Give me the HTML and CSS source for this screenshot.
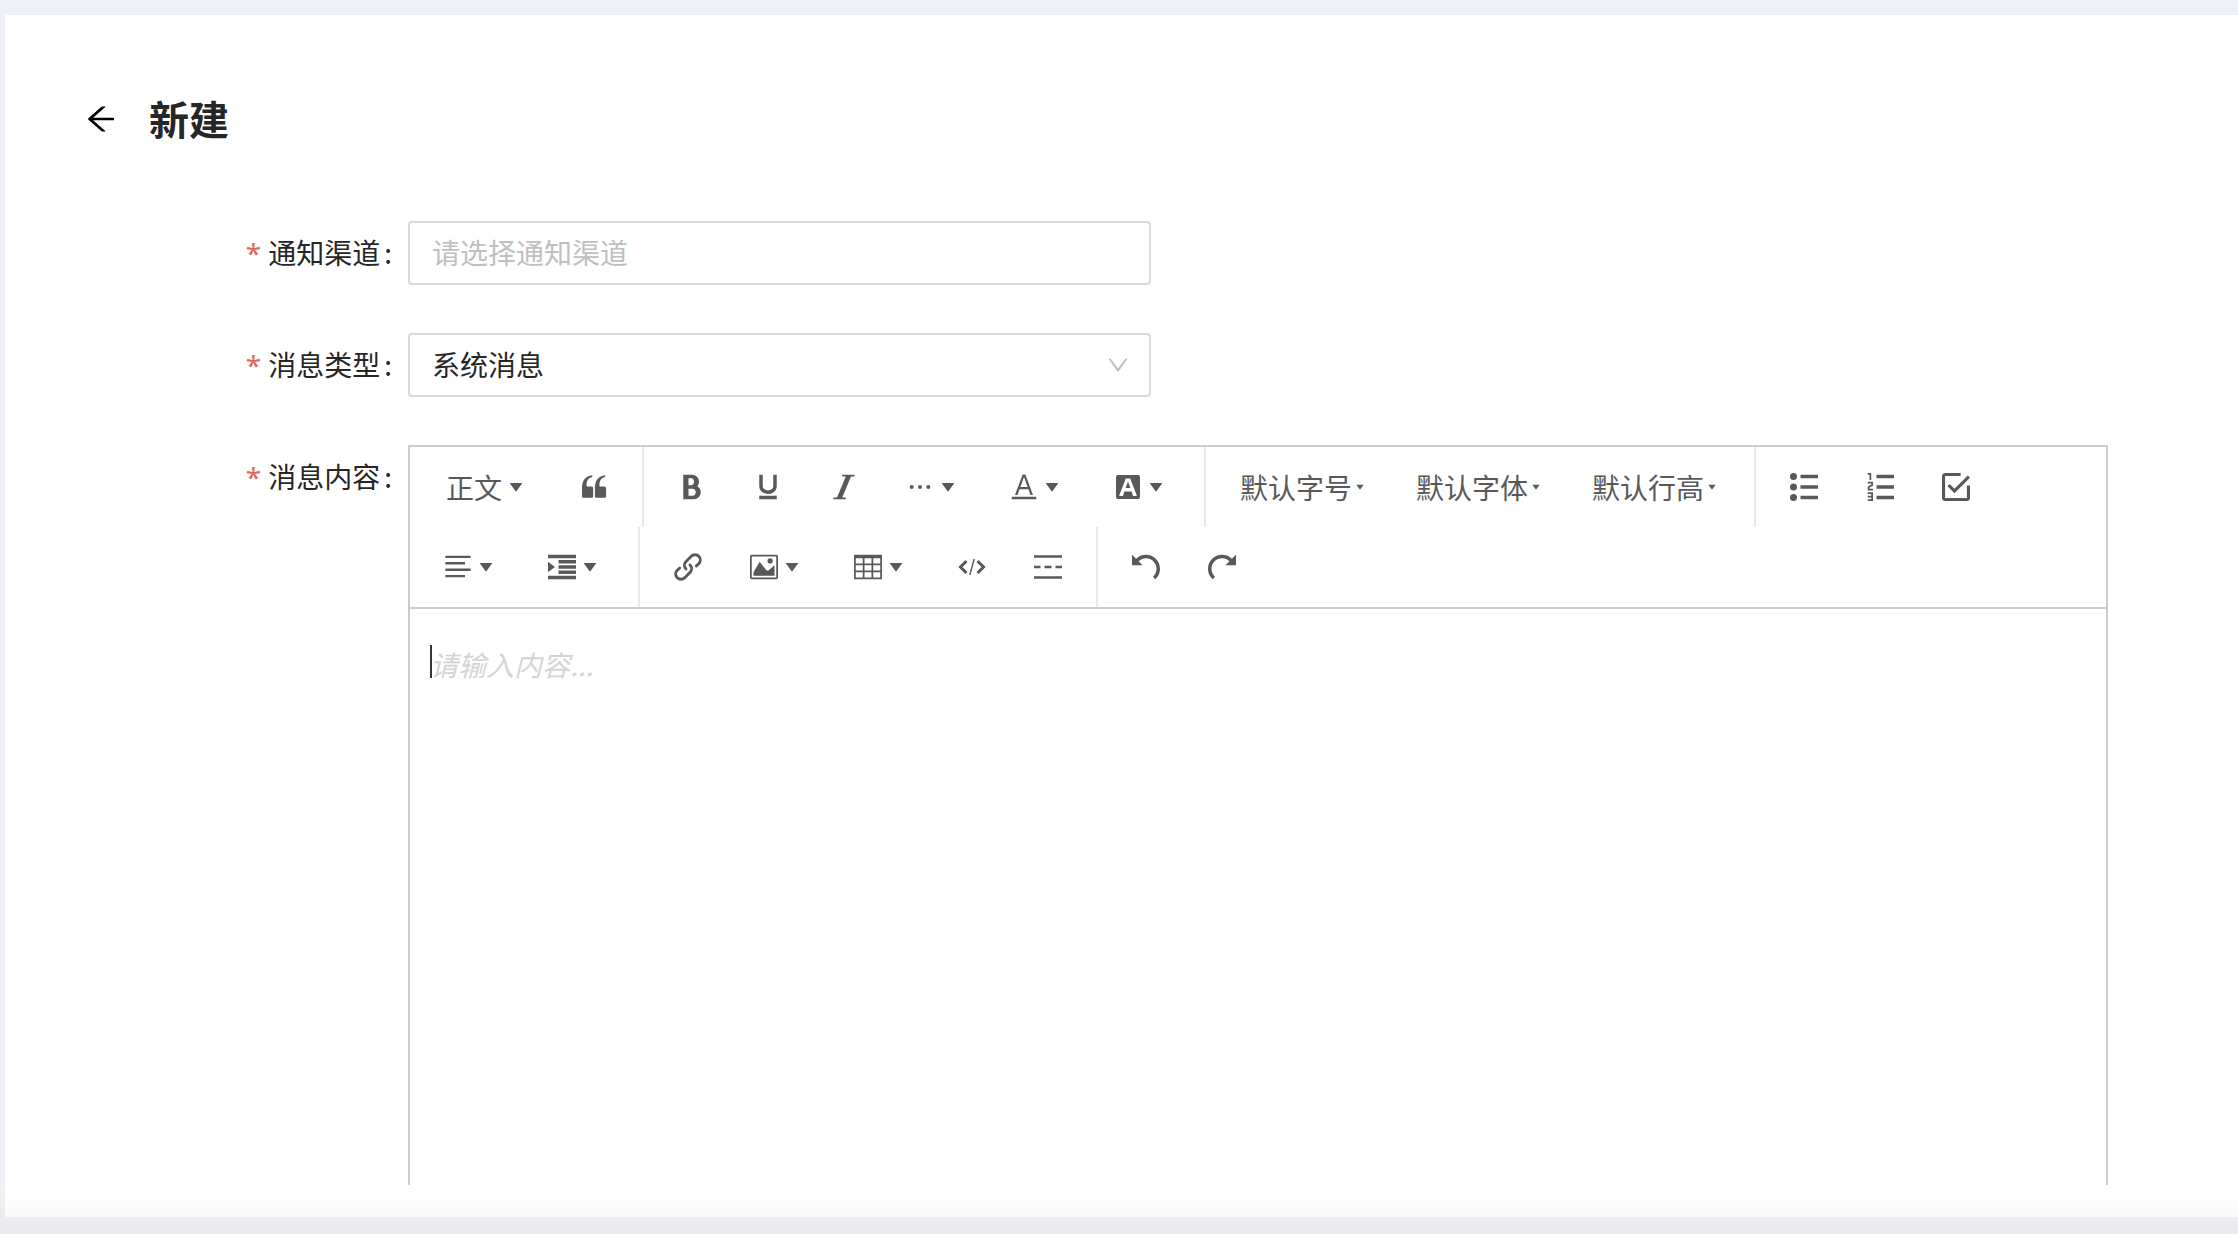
FILE: index.html
```html
<!DOCTYPE html>
<html lang="zh-CN">
<head>
<meta charset="utf-8">
<meta name="viewport" content="width=device-width, initial-scale=1">
<title>新建</title>
<link rel="stylesheet" href="styles.css">
</head>
<body>
<svg class="sprite" aria-hidden="true">
  <symbol id="caret" viewBox="0 0 1024 1024"><path d="M498.7 665.8l-208-278c-8.1-10.9-.3-26.4 13.3-26.4h416c13.6 0 21.4 15.4 13.3 26.4l-208 278c-6.6 9-20 9-26.6 0z"/></symbol>
</svg>
<main class="card">
  <header class="page-header">
    <button class="back" type="button" aria-label="返回">
      <svg class="back-icon" viewBox="0 0 1024 1024"><path d="M872 474H286.900l350.200-304c5.600-4.900 2.200-14-5.200-14h-88.500c-3.900 0-7.600 1.400-10.500 3.900L155 487.800a31.960 31.960 0 000 48.300L535.100 866c1.500 1.300 3.300 2 5.200 2h91.500c7.400 0 10.800-9.200 5.200-14L286.900 550H872c4.400 0 8-3.600 8-8v-60c0-4.400-3.600-8-8-8z"/></svg>
    </button>
    <h1 class="title">新建</h1>
  </header>
  <form class="form">
    <div class="form-item">
      <label class="label" for="channel"><span class="required">*</span>通知渠道<span class="colon">:</span></label>
      <div class="control">
        <input class="field" id="channel" type="text" placeholder="请选择通知渠道">
      </div>
    </div>
    <div class="form-item">
      <label class="label" for="type"><span class="required">*</span>消息类型<span class="colon">:</span></label>
      <div class="control">
        <select class="field" id="type"><option>系统消息</option></select>
        <svg class="arrow" viewBox="0 0 1024 1024"><path d="M884 256h-75c-5.100 0-9.900 2.500-12.900 6.600L512 654.200 227.900 262.600c-3-4.100-7.800-6.600-12.900-6.600h-75c-6.500 0-10.300 7.400-6.500 12.700l352.600 486.100c12.800 17.600 39 17.600 51.700 0l352.600-486.100c3.900-5.300.1-12.700-6.400-12.700z"/></svg>
      </div>
    </div>
    <div class="form-item form-item-grow">
      <label class="label" for="content"><span class="required">*</span>消息内容<span class="colon">:</span></label>
      <div class="editor">
        <div class="toolbar" role="toolbar" aria-label="编辑工具栏">
          <button class="tool tool-heading" type="button">正文<svg class="icon"><use href="#caret"/></svg></button>
          <button class="tool" type="button" aria-label="引用"><svg class="icon" viewBox="0 0 1024 1024"><path d="M894.600 907.100H605.400c-32.600 0-59-26.400-59-59V608.200l-4-14.900c0-315.900 125.500-485.100 376.500-507.500v59.800C752.700 180.400 711.300 315.800 711.300 442.400v41.200l31.500 12.300h151.800c32.600 0 59 26.400 59 59v293.200c0 32.500-26.400 59-59 59z m-472 0H133.400c-32.600 0-59-26.400-59-59V608.200l-4-14.900c0-315.900 125.500-485.100 376.500-507.500v59.800C280.700 180.400 239.300 315.800 239.300 442.400v41.200l31.500 12.300h151.800c32.600 0 59 26.400 59 59v293.200c0 32.500-26.400 59-59 59z"/></svg></button>
          <span class="divider"></span>
          <button class="tool" type="button" aria-label="粗体"><svg class="icon" viewBox="0 0 1024 1024"><path d="M707.872 484.640A254.880 254.880 0 0 0 768 320c0-141.152-114.848-256-256-256H192v896h384c141.152 0 256-114.848 256-256a256.096 256.096 0 0 0-124.128-219.360zM384 192h101.504c55.968 0 101.504 57.408 101.504 128s-45.536 128-101.504 128H384V192z m159.008 640H384v-256h159.008c58.464 0 106.016 57.408 106.016 128s-47.552 128-106.016 128z"/></svg></button>
          <button class="tool" type="button" aria-label="下划线"><svg class="icon" viewBox="0 0 1024 1024"><path d="M704 64h128v416c0 159.072-143.264 288-320 288s-320-128.928-320-288V64h128v416c0 40.160 18.240 78.688 51.360 108.512 36.896 33.216 86.848 51.488 140.640 51.488s103.744-18.304 140.640-51.488c33.120-29.792 51.360-68.352 51.360-108.512zM192 832h640v128H192z"/></svg></button>
          <button class="tool" type="button" aria-label="斜体"><svg class="icon" viewBox="0 0 1024 1024"><path d="M896 64v64h-128L448 896h128v64H128v-64h128L576 128h-128V64z"/></svg></button>
          <button class="tool" type="button" aria-label="更多"><svg class="icon" viewBox="0 0 28 28"><circle cx="5.700" cy="14" r="2"/><circle cx="14" cy="14" r="2"/><circle cx="22.300" cy="14" r="2"/></svg><svg class="icon"><use href="#caret"/></svg></button>
          <button class="tool" type="button" aria-label="文字颜色"><svg class="icon" viewBox="0 0 1024 1024"><path fill-rule="evenodd" d="M64 864h896v100H64zM274 800h-91L462 55h100l279 745h-91l-76-208H350zM380 510h264L512 150z"/></svg><svg class="icon"><use href="#caret"/></svg></button>
          <button class="tool" type="button" aria-label="背景色"><svg class="icon" viewBox="0 0 28 28"><path fill-rule="evenodd" d="M4 2h20a2 2 0 0 1 2 2v20a2 2 0 0 1-2 2H4a2 2 0 0 1-2-2V4a2 2 0 0 1 2-2zM5 23h4l1.400-4.500h7.200L19 23h4L16.200 5.500h-4.400zM11.600 15l2.400-6.500 2.400 6.500z"/></svg><svg class="icon"><use href="#caret"/></svg></button>
          <span class="divider"></span>
          <button class="tool" type="button">默认字号<svg class="icon icon-small"><use href="#caret"/></svg></button>
          <button class="tool" type="button">默认字体<svg class="icon icon-small"><use href="#caret"/></svg></button>
          <button class="tool" type="button">默认行高<svg class="icon icon-small"><use href="#caret"/></svg></button>
          <span class="divider"></span>
          <button class="tool" type="button" aria-label="无序列表"><svg class="icon" viewBox="0 0 1024 1024"><path d="M384 64h640v128H384zM384 448h640v128H384zM384 832h640v128H384z"/><circle cx="128" cy="128" r="128"/><circle cx="128" cy="512" r="128"/><circle cx="128" cy="896" r="128"/></svg></button>
          <button class="tool" type="button" aria-label="有序列表"><svg class="icon" viewBox="0 0 1024 1024"><path d="M384 832h640v128H384z m0-384h640v128H384z m0-384h640v128H384zM192 0v256H128V64H64V0zM128 526.016v50.016h128v64H64v-146.016l128-60V384H64v-64h192v146.016zM256 704v320H64v-64h128v-64H64v-64h128v-64H64v-64z"/></svg></button>
          <button class="tool" type="button" aria-label="待办"><svg class="icon" viewBox="0 0 1024 1024"><path d="M278.756 403.911l-79.645 79.645L455.111 739.556 1024 170.667l-79.644-79.645L455.111 580.267zM910.222 910.222H113.778V113.778h568.889V0H113.778C51.200 0 0 51.200 0 113.778v796.444C0 972.800 51.200 1024 113.778 1024h796.444C972.800 1024 1024 972.800 1024 910.222V455.111H910.222z"/></svg></button>
          <button class="tool" type="button" aria-label="对齐"><svg class="icon" viewBox="0 0 1024 1024"><path d="M51 96h922v90H51zM51 328h717v90H51zM51 568h922v90H51zM51 800h717v90H51z"/></svg><svg class="icon"><use href="#caret"/></svg></button>
          <button class="tool" type="button" aria-label="缩进"><svg class="icon" viewBox="0 0 1024 1024"><path d="M0 64h1024v128H0z m384 192h640v128H384z m0 192h640v128H384z m0 192h640v128H384zM0 832h1024v128H0z m0-128V320l256 192z"/></svg><svg class="icon"><use href="#caret"/></svg></button>
          <span class="divider"></span>
          <button class="tool" type="button" aria-label="链接"><svg class="icon" viewBox="0 0 1024 1024"><path d="M440.224 635.776a51.840 51.840 0 0 1-36.768-15.232c-95.136-95.136-95.136-249.920 0-345.056l192-192C641.536 37.408 702.816 12.032 768 12.032s126.432 25.376 172.544 71.456c95.136 95.136 95.136 249.920 0 345.056l-87.776 87.776a51.968 51.968 0 1 1-73.536-73.536l87.776-87.776a140.160 140.160 0 0 0 0-197.984c-26.432-26.432-61.600-40.992-99.008-40.992s-72.576 14.560-99.008 40.992l-192 192a140.160 140.160 0 0 0 0 197.984 51.968 51.968 0 0 1-36.768 88.768zM256 1012a242.400 242.400 0 0 1-172.544-71.456c-95.136-95.136-95.136-249.920 0-345.056l87.776-87.776a51.968 51.968 0 1 1 73.536 73.536l-87.776 87.776a140.160 140.160 0 0 0 0 197.984c26.432 26.432 61.600 40.992 99.008 40.992s72.576-14.560 99.008-40.992l192-192a140.160 140.160 0 0 0 0-197.984 51.968 51.968 0 1 1 73.536-73.536c95.136 95.136 95.136 249.920 0 345.056l-192 192A242.400 242.400 0 0 1 256 1012z"/></svg></button>
          <button class="tool" type="button" aria-label="图片"><svg class="icon" viewBox="0 0 1024 1024"><path fill-rule="evenodd" d="M64 64h896a64 64 0 0 1 64 64v768a64 64 0 0 1-64 64H64a64 64 0 0 1-64-64V128a64 64 0 0 1 64-64zM64 128v768h896V128zM896 832H128V704l224-384 256 320h64l224-192z"/><circle cx="736" cy="288" r="96"/></svg><svg class="icon"><use href="#caret"/></svg></button>
          <button class="tool" type="button" aria-label="表格"><svg class="icon" viewBox="0 0 1024 1024"><path fill-rule="evenodd" d="M0 64v896h1024V64zM384 640V448h256v192zM640 704v192H384V704zM640 192v192H384V192zM320 192v192H64V192zM64 448h256v192H64zM704 448h256v192H704zM704 384V192h256v192zM64 704h256v192H64zM704 896V704h256v192z"/></svg><svg class="icon"><use href="#caret"/></svg></button>
          <button class="tool" type="button" aria-label="代码"><svg class="icon" viewBox="0 0 28 28"><path class="stroke" d="M8.500 8L2.500 14l6 6M19.500 8l6 6-6 6"/><path class="stroke-thin" d="M16.200 6L11.800 22"/></svg></button>
          <button class="tool" type="button" aria-label="分割线"><svg class="icon" viewBox="0 0 28 28"><path d="M0 2.300h28v2.400H0zM0 23.300h28v2.400H0zM0 12.800h6.500v2.400H0zM10.500 12.800h7v2.400h-7zM21.500 12.800H28v2.400h-6.500z"/></svg></button>
          <span class="divider"></span>
          <button class="tool" type="button" aria-label="撤销"><svg class="icon" viewBox="0 0 1024 1024"><path d="M512 64A510.272 510.272 0 0 0 149.984 213.984L0 64v384h384L240.512 304.480A382.784 382.784 0 0 1 512 192c212.064 0 384 171.936 384 384 0 114.688-50.304 217.632-130.016 288l84.672 96A510.720 510.720 0 0 0 1024 576C1024 293.216 794.784 64 512 64z"/></svg></button>
          <button class="tool" type="button" aria-label="重做"><svg class="icon" viewBox="0 0 1024 1024"><path d="M0 576a510.720 510.720 0 0 0 173.344 384l84.672-96A383.136 383.136 0 0 1 128 576C128 363.936 299.936 192 512 192c106.048 0 202.048 42.976 271.520 112.480L640 448h384V64L874.016 213.984A510.272 510.272 0 0 0 512 64C229.216 64 0 293.216 0 576z"/></svg></button>
        </div>
        <div class="editor-body">
          <textarea class="content" id="content" placeholder="请输入内容..."></textarea>
          <span class="cursor"></span>
        </div>
      </div>
    </div>
  </form>
</main>
</body>
</html>
```
FILE: styles.css
```css
* {
  box-sizing: border-box;
}

body {
  margin: 0;
  min-height: 100vh;
  display: flex;
  flex-direction: column;
  padding: 15px 0 17px 5px;
  background: linear-gradient(to top, #e9e9ee, #ededf1 20px, #f0f1f6 56px);
  color: #262626;
  font-family: "Noto Sans CJK SC", sans-serif;
  font-size: 28px;
  line-height: 44px;
}

button,
input,
select,
textarea {
  margin: 0;
  color: inherit;
  font: inherit;
}

.sprite {
  position: absolute;
  width: 0;
  height: 0;
}

.card {
  flex: 1;
  display: flex;
  flex-direction: column;
  padding: 72px 130px 32px 78px;
  background: linear-gradient(to top, #fafafa, #fff 32px);
}

.page-header {
  display: flex;
  align-items: center;
  gap: 30px;
  height: 64px;
  margin-bottom: 70px;
}

.back {
  display: flex;
  padding: 0;
  border: 0;
  background: none;
  color: #000;
}

.back-icon {
  width: 36px;
  height: 36px;
  fill: currentColor;
}

.title {
  margin: 0;
  padding-bottom: 3px;
  font-size: 40px;
  font-weight: 700;
  line-height: 60px;
}

.form {
  flex: 1;
  display: flex;
  flex-direction: column;
  gap: 48px;
}

.form-item {
  display: flex;
}

.form-item-grow {
  flex: 1;
}

.label {
  display: flex;
  justify-content: flex-end;
  flex: none;
  width: 325px;
  height: 64px;
  line-height: 62px;
}

.required {
  margin-right: 7px;
  color: #e8605a;
  font-family: "Noto Sans", sans-serif;
  line-height: 64px;
}

.colon {
  margin: 0 16px 0 4px;
}

.control {
  position: relative;
  flex: 1;
  max-width: 743px;
}

.field {
  display: block;
  width: 100%;
  height: 64px;
  padding: 0 22px 2px;
  border: 2px solid #d9d9d9;
  border-radius: 4px;
  background: #fff;
  appearance: none;
  outline: none;
}

.field::placeholder {
  color: #bfbfbf;
  opacity: 1;
}

.arrow {
  position: absolute;
  top: 18px;
  right: 20px;
  width: 26px;
  height: 28px;
  fill: #bfbfbf;
  pointer-events: none;
}

.editor {
  flex: 1;
  display: flex;
  flex-direction: column;
  min-width: 0;
  border: 2px solid #ccc;
  border-bottom: 0;
}

.toolbar {
  display: flex;
  flex-wrap: wrap;
  padding: 0 10px;
  border-bottom: 2px solid #ccc;
  color: #595959;
}

.tool {
  display: flex;
  align-items: center;
  height: 64px;
  margin: 8px;
  padding: 0 16px;
  border: 0;
  background: none;
}

.tool-heading {
  padding: 0 18px;
}

.icon {
  width: 28px;
  height: 28px;
  fill: currentColor;
}

.icon-small {
  width: 16px;
  height: 16px;
}

.stroke {
  fill: none;
  stroke: currentColor;
  stroke-width: 3;
}

.stroke-thin {
  fill: none;
  stroke: currentColor;
  stroke-width: 1.4;
}

.divider {
  width: 2px;
  height: 80px;
  margin: 0 10px;
  background: #e8e8e8;
}

.editor-body {
  position: relative;
  flex: 1;
  display: flex;
}

.content {
  flex: 1;
  padding: 33px 20px;
  border: 0;
  background: none;
  outline: none;
  resize: none;
}

.content::placeholder {
  color: #d4d4d4;
  font-style: italic;
  opacity: 1;
}

.cursor {
  position: absolute;
  top: 36px;
  left: 20px;
  width: 2px;
  height: 33px;
  background: #333;
}
```
